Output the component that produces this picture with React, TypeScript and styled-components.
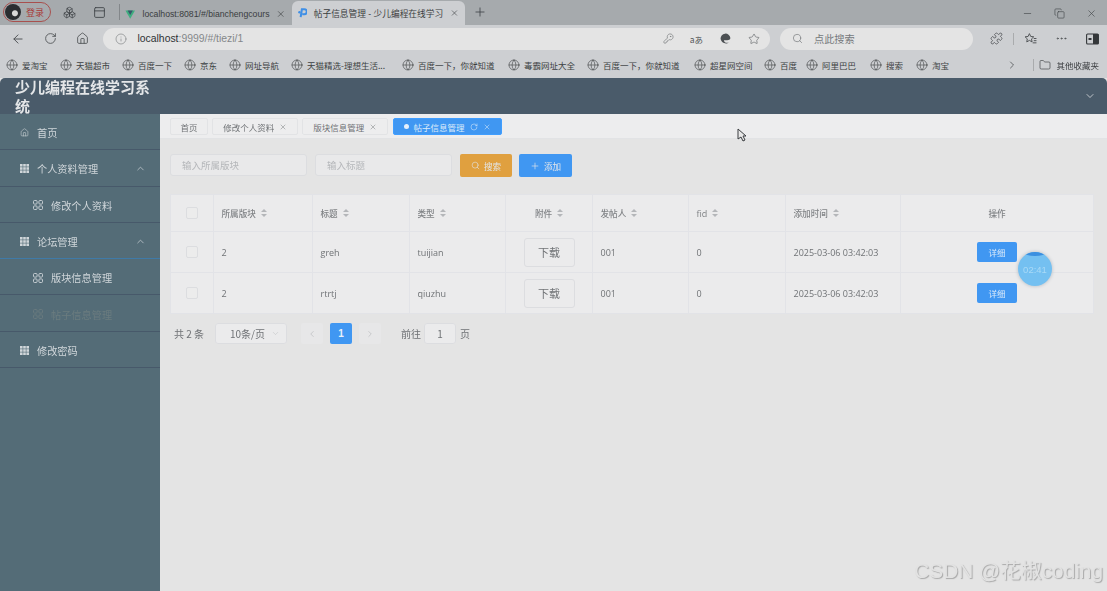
import React from 'react';
import styled, { createGlobalStyle } from 'styled-components';
import {
  ArrowLeft,
  RotateCw,
  Home,
  Info,
  KeyRound,
  Star,
  Search,
  Globe,
  ChevronRight,
  ChevronLeft,
  ChevronUp,
  ChevronDown,
  Folder,
  Minus,
  Copy,
  X,
  Plus,
  Boxes,
  PanelTop,
  Puzzle,
  MoreHorizontal,
} from 'lucide-react';

const FONT = '"Noto Sans CJK SC", "Liberation Sans", sans-serif';

const GlobalStyle = createGlobalStyle`
  html, body {
    margin: 0;
    padding: 0;
    height: 100%;
    overflow: hidden;
    background: #e4e4e4;
    font-family: "Liberation Sans", "Noto Sans CJK SC", sans-serif;
  }
  #root {
    height: 100%;
  }
`;

const Page = styled.div`
  position: relative;
  width: 1107px;
  height: 591px;
  display: flex;
  flex-direction: column;
  overflow: hidden;
  filter: blur(0.5px);
`;

/* browser chrome */
const TabStrip = styled.div`
  height: 25px;
  background: #a6aaad;
  display: flex;
  align-items: flex-end;
  flex-shrink: 0;
`;

const ProfilePill = styled.div`
  width: 48px;
  height: 20px;
  margin: 0 0 3px 3px;
  border: 1px solid #a8504e;
  border-radius: 11px;
  display: flex;
  align-items: center;
  gap: 5px;
  box-sizing: border-box;
  color: #a83a38;
  font-size: 9px;
  font-family: ${FONT};
`;

const Avatar = styled.div`
  width: 16px;
  height: 16px;
  margin-left: 1px;
  border-radius: 50%;
  background: radial-gradient(circle at 62% 58%, #d8d8d8 0 2.5px, #2a2d31 3.5px);
`;

const StripIcon = styled.div<{ $ml: number }>`
  margin: 0 0 6px ${(p) => p.$ml}px;
  display: flex;
  color: #3f4347;
`;

const StripDivider = styled.div`
  width: 1px;
  height: 16px;
  margin: 0 4px 5px 13px;
  background: #83878a;
`;

const BrowserTab = styled.div<{ $active?: boolean; $w: number }>`
  width: ${(p) => p.$w}px;
  height: ${(p) => (p.$active ? 24 : 22)}px;
  padding: 0 6px 0 ${(p) => (p.$active ? 5 : 1)}px;
  box-sizing: border-box;
  display: flex;
  align-items: center;
  gap: 7px;
  font-size: 8.7px;
  font-family: "Liberation Sans", "Noto Sans CJK SC", sans-serif;
  color: #3a3d40;
  background: ${(p) => (p.$active ? '#cdcfd2' : 'transparent')};
  border-radius: 6px 6px 0 0;
`;

const TabTitle = styled.span`
  flex: 1;
  white-space: nowrap;
`;

const WindowButtons = styled.div`
  margin: 0 0 6px auto;
  display: flex;
  gap: 21px;
  padding-right: 10px;
  color: #44484b;
`;

const Toolbar = styled.div`
  height: 27px;
  background: #cdcfd2;
  display: flex;
  align-items: center;
  padding-left: 11px;
  flex-shrink: 0;
  color: #4a4d50;
`;

const ToolIcon = styled.div<{ $ml?: number }>`
  display: flex;
  margin-left: ${(p) => p.$ml ?? 0}px;
  color: #505356;
`;

const AddressBar = styled.div`
  width: 667px;
  height: 22px;
  margin-left: 14.5px;
  padding: 0 10px 0 12px;
  box-sizing: border-box;
  background: #e4e4e4;
  border-radius: 11px;
  display: flex;
  align-items: center;
  font-size: 10.4px;
  color: #85888a;
`;

const AddressHost = styled.span`
  margin-left: 10.5px;
  color: #2f3234;
`;

const AddressActions = styled.div`
  margin-left: auto;
  display: flex;
  align-items: center;
  gap: 16px;
  color: #6a6d70;
`;

const TranslateGlyph = styled.span`
  font-size: 8.5px;
  font-family: ${FONT};
  color: #55585a;
`;

const SearchBar = styled.div`
  width: 193px;
  height: 22px;
  margin-left: 10px;
  padding-left: 12px;
  box-sizing: border-box;
  background: #e4e4e4;
  border-radius: 11px;
  display: flex;
  align-items: center;
  gap: 11px;
  font-size: 10.2px;
  font-family: ${FONT};
  color: #76797c;
`;

const ToolDivider = styled.div`
  width: 1px;
  height: 12px;
  margin-left: 10px;
  background: #a9abad;
`;

const BookmarkBar = styled.div`
  height: 26px;
  background: #cdcfd2;
  display: flex;
  align-items: center;
  padding-left: 6px;
  flex-shrink: 0;
  font-family: ${FONT};
  font-size: 8.5px;
  color: #3c3f42;
`;

const Bookmark = styled.div<{ $w: number }>`
  width: ${(p) => p.$w}px;
  display: flex;
  align-items: center;
  gap: 4px;
  white-space: nowrap;
  flex-shrink: 0;
`;

const BookmarkEnd = styled.div`
  margin-left: auto;
  display: flex;
  align-items: center;
  padding-right: 8px;
  gap: 5px;
`;

/* application */
const AppHeader = styled.header`
  height: 36px;
  background: #4a5b6a;
  border-radius: 5px 5px 0 0;
  display: flex;
  align-items: center;
  justify-content: space-between;
  padding: 0 11px 0 15px;
  box-sizing: border-box;
  flex-shrink: 0;
  color: #e4e6e8;
`;

const AppTitle = styled.div`
  width: 146px;
  font-family: ${FONT};
  font-weight: 700;
  font-size: 15px;
  line-height: 19px;
`;

const AppBody = styled.div`
  flex: 1;
  display: flex;
  min-height: 0;
`;

const Sidebar = styled.aside`
  width: 160px;
  background: #546c77;
  flex-shrink: 0;
  font-family: ${FONT};
`;

const MenuItem = styled.div<{ $sub?: boolean; $dim?: boolean; $blue?: boolean }>`
  height: 36.3px;
  box-sizing: border-box;
  padding: 2px 14px 0 ${(p) => (p.$sub ? 33 : 20)}px;
  display: flex;
  align-items: center;
  gap: 8px;
  font-size: 10.2px;
  color: ${(p) => (p.$dim ? '#6b7c7f' : '#d0d6da')};
  border-bottom: 1px solid ${(p) => (p.$blue ? '#3f7aa8' : '#47596a')};
`;

const MenuArrow = styled.div`
  margin-left: auto;
  display: flex;
`;

const Content = styled.main`
  flex: 1;
  min-width: 0;
  background: #e4e4e4;
  display: flex;
  flex-direction: column;
  color: #6f7275;
  font-family: ${FONT};
`;

const TagsBar = styled.div`
  height: 25px;
  background: #ededee;
  border-bottom: 1px solid #e2e3e5;
  box-sizing: border-box;
  padding: 4px 0 0 10px;
  display: flex;
  gap: 4.2px;
  flex-shrink: 0;
`;

const Tag = styled.div<{ $active?: boolean; $w: number }>`
  width: ${(p) => p.$w}px;
  height: 17px;
  box-sizing: border-box;
  border: 1px solid ${(p) => (p.$active ? '#409eff' : '#e2e3e5')};
  background: ${(p) => (p.$active ? '#4097f2' : '#ededee')};
  color: ${(p) => (p.$active ? '#dcebfa' : '#6f7275')};
  border-radius: 2px;
  display: flex;
  align-items: center;
  justify-content: center;
  gap: 5px;
  font-size: 8.5px;
  white-space: nowrap;
`;

const TagDot = styled.span`
  width: 5px;
  height: 5px;
  border-radius: 50%;
  background: #e6f0fb;
`;

const Filters = styled.div`
  display: flex;
  padding: 15px 0 0 10px;
  height: 22px;
`;

const FilterInput = styled.div<{ $ml?: number }>`
  width: 137px;
  height: 22px;
  margin-left: ${(p) => p.$ml ?? 0}px;
  box-sizing: border-box;
  padding-left: 11px;
  border: 1px solid #dcdde0;
  border-radius: 3px;
  background: #e9e9ea;
  display: flex;
  align-items: center;
  font-size: 9.5px;
  color: #b5b7ba;
`;

const ActionButton = styled.div<{ $color: string; $w: number; $ml: number }>`
  width: ${(p) => p.$w}px;
  height: 23px;
  margin-left: ${(p) => p.$ml}px;
  border-radius: 2px;
  background: ${(p) => p.$color};
  color: #e3e6ea;
  display: flex;
  align-items: center;
  justify-content: center;
  gap: 4px;
  font-size: 8.6px;
`;

const TableGrid = styled.div`
  margin: 18px 0 0 10px;
  width: 924px;
  border: 1px solid #e2e3e7;
  box-sizing: border-box;
  background: #ebebec;
`;

const TableRow = styled.div<{ $h: number }>`
  height: ${(p) => p.$h}px;
  display: grid;
  grid-template-columns: 43px 99px 97px 96px 87px 96px 97px 115px 1fr;
  box-sizing: border-box;
  border-bottom: 1px solid #e2e3e7;
  &:last-child {
    border-bottom: none;
  }
`;

const Cell = styled.div<{ $center?: boolean; $head?: boolean }>`
  display: flex;
  align-items: center;
  justify-content: ${(p) => (p.$center ? 'center' : 'flex-start')};
  padding-left: ${(p) => (p.$center ? 0 : 7.5)}px;
  border-right: 1px solid #e2e3e7;
  font-size: ${(p) => (p.$head ? 8.6 : 9)}px;
  color: ${(p) => (p.$head ? '#808386' : '#6f7275')};
  font-weight: ${(p) => (p.$head ? 500 : 400)};
  gap: 5px;
  white-space: nowrap;
  &:last-child {
    border-right: none;
  }
`;

const Latin = styled.span`
  font-family: "Open Sans", "Liberation Sans", sans-serif;
  font-size: 9px;
`;

const Check = styled.span`
  width: 10px;
  height: 10px;
  border: 1px solid #dcdde0;
  border-radius: 2px;
  background: #ececec;
`;

const SortCaret = styled.span`
  display: inline-flex;
  flex-direction: column;
  gap: 1.5px;
  &::before,
  &::after {
    content: '';
    width: 0;
    height: 0;
    border-left: 3px solid transparent;
    border-right: 3px solid transparent;
  }
  &::before {
    border-bottom: 3px solid #b4b6b9;
  }
  &::after {
    border-top: 3px solid #b4b6b9;
  }
`;

const DownloadButton = styled.div`
  width: 51px;
  height: 29px;
  box-sizing: border-box;
  border: 1px solid #dcdde0;
  border-radius: 3px;
  background: #ebebec;
  color: #707376;
  font-size: 11px;
  display: flex;
  align-items: center;
  justify-content: center;
`;

const DetailButton = styled.div`
  width: 40px;
  height: 20px;
  border-radius: 2px;
  background: #4097f2;
  color: #dcebfa;
  font-size: 8.5px;
  display: flex;
  align-items: center;
  justify-content: center;
`;

const Pager = styled.div`
  display: flex;
  align-items: center;
  height: 21px;
  margin: 9px 0 0 14px;
  font-size: 10px;
  color: #6f7275;
`;

const PageTotal = styled.span`
  width: 30px;
  white-space: pre;
`;

const PageSelect = styled.div`
  width: 72px;
  height: 21px;
  margin-left: 11px;
  box-sizing: border-box;
  padding: 0 6px 0 14px;
  border: 1px solid #dcdde0;
  border-radius: 3px;
  background: #ebebec;
  display: flex;
  align-items: center;
  justify-content: space-between;
`;

const PageBtn = styled.div<{ $on?: boolean; $ml: number }>`
  width: 22px;
  height: 21px;
  margin-left: ${(p) => p.$ml}px;
  border-radius: 2px;
  background: ${(p) => (p.$on ? '#4097f2' : '#e7e7e8')};
  color: ${(p) => (p.$on ? '#e8f1fb' : '#b8babd')};
  font-weight: ${(p) => (p.$on ? 700 : 400)};
  font-family: "Liberation Sans", sans-serif;
  display: flex;
  align-items: center;
  justify-content: center;
`;

const JumpLabel = styled.span<{ $ml: number }>`
  margin-left: ${(p) => p.$ml}px;
`;

const JumpInput = styled.div`
  width: 32px;
  height: 21px;
  margin: 0 4px 0 3px;
  box-sizing: border-box;
  border: 1px solid #dcdde0;
  border-radius: 3px;
  background: #ebebec;
  display: flex;
  align-items: center;
  justify-content: center;
`;

/* overlays */
const TimerBubble = styled.div`
  position: absolute;
  left: 1018px;
  top: 252px;
  width: 34px;
  height: 34px;
  border-radius: 50%;
  overflow: hidden;
  background: #74c0f1;
  box-shadow: 0 0 3px 1px #c9cdd2;
  color: #a9daf7;
  font-size: 9.5px;
  display: flex;
  align-items: center;
  justify-content: center;
  &::before {
    content: '';
    position: absolute;
    left: 6px;
    right: 6px;
    top: -3px;
    height: 7px;
    border-radius: 50%;
    background: #3b8fe0;
  }
`;

const Cursor = styled.svg`
  position: absolute;
  left: 737px;
  top: 128px;
`;

const Watermark = styled.div`
  position: absolute;
  right: 4px;
  bottom: 7px;
  font-family: "Liberation Sans", "Noto Sans CJK SC", sans-serif;
  font-size: 20.8px;
  color: #e2e2e2;
  text-shadow: 1px 1px 1px #a8a8a8;
  white-space: nowrap;
`;

const bookmarks = [
  { label: '爱淘宝', w: 54 },
  { label: '天猫超市', w: 62 },
  { label: '百度一下', w: 62 },
  { label: '京东', w: 45 },
  { label: '网址导航', w: 62 },
  { label: '天猫精选-理想生活...', w: 111 },
  { label: '百度一下，你就知道', w: 106 },
  { label: '毒霸网址大全', w: 79 },
  { label: '百度一下，你就知道', w: 107 },
  { label: '超星网空间', w: 70 },
  { label: '百度', w: 42 },
  { label: '阿里巴巴', w: 64 },
  { label: '搜索', w: 46 },
  { label: '淘宝', w: 46 },
];

const rows = [
  { title: 'greh', type: 'tuijian', h: 41 },
  { title: 'rtrtj', type: 'qiuzhu', h: 40 },
];

const GridIcon = () => (
  <svg width="9" height="9" viewBox="0 0 9 9" fill="currentColor">
    {[0, 3.2, 6.4].map((y) =>
      [0, 3.2, 6.4].map((x) => <rect key={`${x}-${y}`} x={x} y={y} width="2.6" height="2.6" />),
    )}
  </svg>
);

const MenuIcon = () => (
  <svg width="10" height="10" viewBox="0 0 10 10" fill="none" stroke="currentColor" strokeWidth="0.9">
    <rect x="0.5" y="0.5" width="3.6" height="3.6" rx="1" />
    <rect x="5.9" y="0.5" width="3.6" height="3.6" rx="1" />
    <rect x="0.5" y="5.9" width="3.6" height="3.6" rx="1" />
    <rect x="5.9" y="5.9" width="3.6" height="3.6" rx="1" />
  </svg>
);

const App: React.FC = () => (
  <Page>
    <GlobalStyle />
    <TabStrip>
      <ProfilePill>
        <Avatar />
        登录
      </ProfilePill>
      <StripIcon $ml={12}>
        <Boxes size={13} strokeWidth={1.4} />
      </StripIcon>
      <StripIcon $ml={17}>
        <PanelTop size={13} strokeWidth={1.6} />
      </StripIcon>
      <StripDivider />
      <BrowserTab $w={168}>
        <svg width="11" height="11" viewBox="0 0 24 24">
          <path d="M1 3h22L12 22z" fill="#3fae7f" />
          <path d="M6 3h12l-6 10z" fill="#39566b" />
        </svg>
        <TabTitle>localhost:8081/#/bianchengcours</TabTitle>
        <X size={10} strokeWidth={1.6} />
      </BrowserTab>
      <BrowserTab $active $w={173}>
        <svg width="11" height="12" viewBox="0 0 24 24">
          <path d="M9 22 12 3h6a6 6 0 0 1 0 12h-5" fill="none" stroke="#3f8fe6" strokeWidth="5" />
          <circle cx="6" cy="10" r="3" fill="#3f8fe6" />
        </svg>
        <TabTitle>帖子信息管理 - 少儿编程在线学习</TabTitle>
        <X size={10} strokeWidth={1.6} />
      </BrowserTab>
      <StripIcon $ml={8}>
        <Plus size={14} strokeWidth={1.4} />
      </StripIcon>
      <WindowButtons>
        <Minus size={11} strokeWidth={1.4} />
        <Copy size={11} strokeWidth={1.4} />
        <X size={11} strokeWidth={1.4} />
      </WindowButtons>
    </TabStrip>

    <Toolbar>
      <ArrowLeft size={14} strokeWidth={1.6} />
      <ToolIcon $ml={18.5}>
        <RotateCw size={13} strokeWidth={1.6} />
      </ToolIcon>
      <ToolIcon $ml={19}>
        <Home size={13} strokeWidth={1.6} />
      </ToolIcon>
      <AddressBar>
        <Info size={12} strokeWidth={1.4} />
        <AddressHost>localhost</AddressHost>:9999/#/tiezi/1
        <AddressActions>
          <KeyRound size={11} strokeWidth={1.3} />
          <TranslateGlyph>aあ</TranslateGlyph>
          <svg width="13" height="13" viewBox="0 0 24 24">
            <path d="M3 13a9 9 0 0 1 18-2c0 3-3 4-6 4H9c0 3 3 5 6 5 1 0 3 0 4-1a10 10 0 0 1-16-6z" fill="#4c5053" />
          </svg>
          <Star size={12} strokeWidth={1.4} />
        </AddressActions>
      </AddressBar>
      <SearchBar>
        <Search size={11} strokeWidth={1.5} />
        点此搜索
      </SearchBar>
      <ToolIcon $ml={16.5}>
        <Puzzle size={13} strokeWidth={1.5} />
      </ToolIcon>
      <ToolDivider />
      <ToolIcon $ml={10}>
        <svg width="13" height="13" viewBox="0 0 24 24" fill="none" stroke="currentColor" strokeWidth="1.8">
          <path d="M10 3l2.4 5.2 5.6.7-4.1 3.8 1 5.6-4.9-2.8-4.9 2.8 1-5.6L2 8.9l5.6-.7z" />
          <path d="M18 12h5M18 16h5M16 20h7" />
        </svg>
      </ToolIcon>
      <ToolIcon $ml={18.5}>
        <MoreHorizontal size={13} strokeWidth={1.6} />
      </ToolIcon>
      <ToolIcon $ml={17.5}>
        <svg width="13" height="12" viewBox="0 0 13 12">
          <rect x="0.6" y="1" width="11.8" height="10" rx="1" fill="none" stroke="#34373a" strokeWidth="1.1" />
          <rect x="7" y="1" width="5.4" height="10" fill="#34373a" />
          <rect x="2.5" y="5" width="3" height="2" fill="#34373a" />
        </svg>
      </ToolIcon>
    </Toolbar>

    <BookmarkBar>
      {bookmarks.map((b, i) => (
        <Bookmark key={i} $w={b.w}>
          <Globe size={12} strokeWidth={1.2} />
          {b.label}
        </Bookmark>
      ))}
      <BookmarkEnd>
        <ChevronRight size={12} strokeWidth={1.4} />
        <ToolDivider />
        <Folder size={12} strokeWidth={1.3} />
        其他收藏夹
      </BookmarkEnd>
    </BookmarkBar>

    <AppHeader>
      <AppTitle>少儿编程在线学习系统</AppTitle>
      <ChevronDown size={12} strokeWidth={1.5} />
    </AppHeader>

    <AppBody>
      <Sidebar>
        <MenuItem>
          <Home size={9} strokeWidth={1.5} />
          首页
        </MenuItem>
        <MenuItem>
          <GridIcon />
          个人资料管理
          <MenuArrow>
            <ChevronUp size={11} strokeWidth={1.5} />
          </MenuArrow>
        </MenuItem>
        <MenuItem $sub>
          <MenuIcon />
          修改个人资料
        </MenuItem>
        <MenuItem $blue>
          <GridIcon />
          论坛管理
          <MenuArrow>
            <ChevronUp size={11} strokeWidth={1.5} />
          </MenuArrow>
        </MenuItem>
        <MenuItem $sub>
          <MenuIcon />
          版块信息管理
        </MenuItem>
        <MenuItem $sub $dim>
          <MenuIcon />
          帖子信息管理
        </MenuItem>
        <MenuItem>
          <GridIcon />
          修改密码
        </MenuItem>
      </Sidebar>

      <Content>
        <TagsBar>
          <Tag $w={38}>首页</Tag>
          <Tag $w={86}>
            修改个人资料 <X size={8} strokeWidth={1.4} />
          </Tag>
          <Tag $w={86}>
            版块信息管理 <X size={8} strokeWidth={1.4} />
          </Tag>
          <Tag $active $w={109}>
            <TagDot />
            帖子信息管理 <RotateCw size={8} strokeWidth={1.6} /> <X size={8} strokeWidth={1.6} />
          </Tag>
        </TagsBar>

        <Filters>
          <FilterInput>输入所属版块</FilterInput>
          <FilterInput $ml={8}>输入标题</FilterInput>
          <ActionButton $color="#e0a03f" $w={52} $ml={8}>
            <Search size={9} strokeWidth={1.6} />
            搜索
          </ActionButton>
          <ActionButton $color="#4097f2" $w={53} $ml={7}>
            <Plus size={10} strokeWidth={1.6} />
            添加
          </ActionButton>
        </Filters>

        <TableGrid>
          <TableRow $h={37}>
            <Cell $center>
              <Check />
            </Cell>
            <Cell $head>
              所属版块 <SortCaret />
            </Cell>
            <Cell $head>
              标题 <SortCaret />
            </Cell>
            <Cell $head>
              类型 <SortCaret />
            </Cell>
            <Cell $head $center>
              附件 <SortCaret />
            </Cell>
            <Cell $head>
              发帖人 <SortCaret />
            </Cell>
            <Cell $head>
              <Latin>fid</Latin> <SortCaret />
            </Cell>
            <Cell $head>
              添加时间 <SortCaret />
            </Cell>
            <Cell $head $center>
              操作
            </Cell>
          </TableRow>
          {rows.map((r) => (
            <TableRow key={r.title} $h={r.h}>
              <Cell $center>
                <Check />
              </Cell>
              <Cell>
                <Latin>2</Latin>
              </Cell>
              <Cell>
                <Latin>{r.title}</Latin>
              </Cell>
              <Cell>
                <Latin>{r.type}</Latin>
              </Cell>
              <Cell $center>
                <DownloadButton>下载</DownloadButton>
              </Cell>
              <Cell>
                <Latin>001</Latin>
              </Cell>
              <Cell>
                <Latin>0</Latin>
              </Cell>
              <Cell>
                <Latin>2025-03-06 03:42:03</Latin>
              </Cell>
              <Cell $center>
                <DetailButton>详细</DetailButton>
              </Cell>
            </TableRow>
          ))}
        </TableGrid>

        <Pager>
          <PageTotal>共 2 条</PageTotal>
          <PageSelect>
            10条/页 <ChevronDown size={9} strokeWidth={1.2} color="#b8babd" />
          </PageSelect>
          <PageBtn $ml={14}>
            <ChevronLeft size={10} strokeWidth={1.6} />
          </PageBtn>
          <PageBtn $on $ml={7}>
            1
          </PageBtn>
          <PageBtn $ml={7}>
            <ChevronRight size={10} strokeWidth={1.6} />
          </PageBtn>
          <JumpLabel $ml={20}>前往</JumpLabel>
          <JumpInput>1</JumpInput>
          页
        </Pager>
      </Content>
    </AppBody>

    <TimerBubble>02:41</TimerBubble>
    <Cursor width="10" height="14" viewBox="0 0 10 14">
      <path d="M1 1v10l3-2 2 4 2-1-2-4h3z" fill="#e8e8e8" stroke="#3a3d40" strokeWidth="1" />
    </Cursor>
    <Watermark>CSDN @花椒coding</Watermark>
  </Page>
);

export default App;
